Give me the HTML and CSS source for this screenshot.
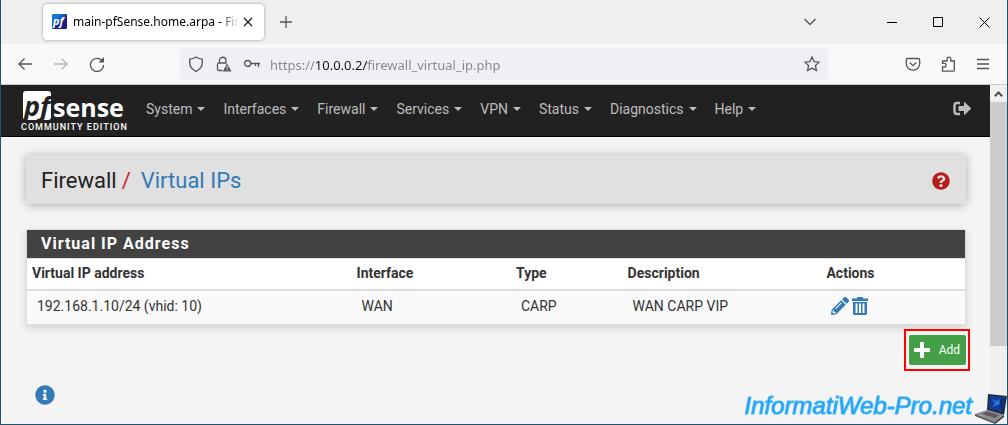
FILE: index.html
```html
<!doctype html>
<html lang="en">
  <head>
    <meta charset="utf-8" />
    <title>main-pfSense.home.arpa - Firewall: Virtual IPs</title>
    <link rel="stylesheet" href="styles.css">
  </head>
  <body>
    <div class="window">
      <header class="tabstrip">
        <div class="tab">
          <svg class="favicon" viewBox="0 0 16 16" width="16" height="16" aria-hidden="true">
            <defs>
              <linearGradient id="fav" x1="0" y1="0" x2="1" y2="1">
                <stop offset="0.3" stop-color="#1478d4" />
                <stop offset="0.6" stop-color="#1c1c86" />
              </linearGradient>
            </defs>
            <rect width="15" height="15" y="0" rx="1" fill="url(#fav)" />
            <text x="1" y="11" class="favicon-text">pf</text>
          </svg>
          <span class="tab-title">main-pfSense.home.arpa - Firew</span>
          <button class="tab-close" aria-label="Close tab">
            <svg viewBox="0 0 10 10" width="10" height="10"><path d="M1 1l8 8M9 1l-8 8" /></svg>
          </button>
        </div>
        <button class="new-tab" aria-label="New tab">
          <svg viewBox="0 0 12 12" width="12" height="12"><path d="M6 0v12M0 6h12" /></svg>
        </button>
        <div class="window-buttons">
          <button aria-label="List all tabs">
            <svg class="grey" viewBox="0 0 14 10" width="14" height="10"><path d="M1.500 2l5.500 5.500 5.500-5.500" /></svg>
          </button>
          <button aria-label="Minimize">
            <svg viewBox="0 0 11 11" width="11" height="11"><path d="M0 5.500h10" /></svg>
          </button>
          <button aria-label="Maximize">
            <svg viewBox="0 0 11 11" width="11" height="11"><path d="M.5.500h9v9h-9z" /></svg>
          </button>
          <button aria-label="Close">
            <svg viewBox="0 0 11 11" width="11" height="11"><path d="M.5.500l10 10M10.500.500l-10 10" /></svg>
          </button>
        </div>
      </header>

      <div class="toolbar">
        <div class="history">
          <button aria-label="Back">
            <svg viewBox="0 0 16 16" width="16" height="16"><path d="M15 8H1.500M7.500 2.500L2 8l5.500 5.500" /></svg>
          </button>
          <button aria-label="Forward" disabled>
            <svg viewBox="0 0 16 16" width="16" height="16"><path d="M1 8h13.500M8.500 2.500L14 8l-5.500 5.500" /></svg>
          </button>
          <button aria-label="Reload">
            <svg viewBox="0 0 16 16" width="16" height="16">
              <path d="M13.500 5.500A6.500 6.500 0 1 0 14.500 9" />
              <path class="fill" d="M15 1v5.500H9.500z" />
            </svg>
          </button>
        </div>
        <div class="urlbar">
          <svg viewBox="0 0 16 16" width="16" height="16">
            <path d="M8 1c2 1.400 4 2 6.300 2.200v3.600c0 4-2.600 6.800-6.300 8.500-3.700-1.700-6.300-4.500-6.300-8.500V3.200C4 3 6 2.400 8 1z" />
          </svg>
          <svg viewBox="0 0 16 16" width="16" height="16">
            <path d="M6.500 14.500H3A1.500 1.500 0 0 1 1.500 13V8.500A1.500 1.500 0 0 1 3 7h7.500M3.500 7V4.500a3.200 3.200 0 0 1 6.500 0V7.500" />
            <path class="fill" d="M11 7.500L6.800 15.500h8.700z" />
            <path class="mark" d="M11.100 10v2.600M11.100 13.400v1" />
          </svg>
          <svg viewBox="0 0 16 16" width="16" height="16">
            <circle cx="3.700" cy="7.500" r="3" />
            <path d="M6.700 7.500H16M14.500 7.500v3.500M11.500 7.500v2.500" />
          </svg>
          <input class="address" type="text" aria-label="Address" value="https://10.0.0.2/firewall_virtual_ip.php" />
          <button aria-label="Bookmark this page">
            <svg viewBox="0 0 16 16" width="16" height="16">
              <path d="M8 1l2.100 4.600 5.100.6-3.800 3.400 1 5L8 12.100l-4.400 2.500 1-5L.8 6.200l5.100-.6z" />
            </svg>
          </button>
        </div>
        <div class="toolbar-end">
          <button aria-label="Save to Pocket">
            <svg viewBox="0 0 16 16" width="16" height="16">
              <path d="M3 2.500h10a1.700 1.700 0 0 1 1.700 1.700V7.500a6.700 6.700 0 0 1-13.400 0V4.200A1.700 1.700 0 0 1 3 2.500z" />
              <path d="M4.700 6.500L8 9.600l3.300-3.100" />
            </svg>
          </button>
          <button aria-label="Extensions">
            <svg viewBox="0 0 16 16" width="16" height="16">
              <path d="M1.500 15.200V11h1.800a1.800 1.800 0 0 0 0-3.700H1.500V5H6V3a1.900 1.900 0 0 1 3.800 0v2h3.500v9q0 1.200-1.200 1.200z" />
            </svg>
          </button>
          <button aria-label="Open application menu">
            <svg viewBox="0 0 12 16" width="12" height="16"><path d="M0 3.500h12M0 8h12M0 12.500h12" /></svg>
          </button>
        </div>
      </div>

      <div class="viewport">
        <div class="page">
          <nav class="navbar">
            <a class="brand" href="#">
              <span class="logo"><span class="logo-pf">pf</span><span class="logo-sense">sense</span></span>
              <span class="edition">COMMUNITY EDITION</span>
            </a>
            <ul class="menu">
              <li><a href="#">System</a></li>
              <li><a href="#">Interfaces</a></li>
              <li><a href="#">Firewall</a></li>
              <li><a href="#">Services</a></li>
              <li><a href="#">VPN</a></li>
              <li><a href="#">Status</a></li>
              <li><a href="#">Diagnostics</a></li>
              <li><a href="#">Help</a></li>
            </ul>
            <a class="logout" href="#" aria-label="Logout">
              <svg viewBox="0 0 18 16" width="18" height="16">
                <path class="line" d="M7 2H4Q1.500 2 1.500 4.500v6Q1.500 13 4 13h3" />
                <path d="M5.500 5.500Q5.500 5 6 5h5V1.700q0-1 .8-.4l6 5.600q.4.600 0 1.200l-6 5.600q-.8.600-.8-.4V10H6q-.5 0-.5-.5z" />
              </svg>
            </a>
          </nav>

          <main class="content">
            <div class="page-header">
              <h1>Firewall<span class="slash">/</span><a href="#">Virtual IPs</a></h1>
              <a class="help" href="#" aria-label="Help for this page">
                <svg viewBox="0 0 512 512" width="18" height="18"><path d="M504 256c0 136.997-111.043 248-248 248S8 392.997 8 256C8 119.083 119.043 8 256 8s248 111.083 248 248zM262.655 90c-54.497 0-89.255 22.957-116.549 63.758-3.536 5.286-2.353 12.415 2.715 16.258l34.699 26.310c5.205 3.947 12.621 3.008 16.665-2.122 17.864-22.658 30.113-35.797 57.303-35.797 20.429 0 45.698 13.148 45.698 32.958 0 14.976-12.363 22.667-32.534 33.976C247.128 238.528 216 254.941 216 296v4c0 6.627 5.373 12 12 12h56c6.627 0 12-5.373 12-12v-1.333c0-28.462 83.186-29.647 83.186-106.667 0-58.002-60.165-102-116.531-102zM256 338c-25.365 0-46 20.635-46 46 0 25.364 20.635 46 46 46s46-20.636 46-46c0-25.365-20.635-46-46-46z" /></svg>
              </a>
            </div>

            <section class="panel">
              <h2>Virtual IP Address</h2>
              <table>
                <thead>
                  <tr>
                    <th class="col-address">Virtual IP address</th>
                    <th class="col-interface">Interface</th>
                    <th class="col-type">Type</th>
                    <th class="col-descr">Description</th>
                    <th>Actions</th>
                  </tr>
                </thead>
                <tbody>
                  <tr>
                    <td>192.168.1.10/24 (vhid: 10)</td>
                    <td>WAN</td>
                    <td>CARP</td>
                    <td>WAN CARP VIP</td>
                    <td>
                      <div class="actions">
                        <a href="#" aria-label="Edit virtual ip">
                          <svg viewBox="0 0 512 512" width="18" height="18"><path d="M497.900 142.100l-46.100 46.100c-4.700 4.700-12.300 4.700-17 0l-111-111c-4.700-4.700-4.700-12.300 0-17l46.100-46.100c18.700-18.700 49.100-18.700 67.900 0l60.100 60.100c18.800 18.700 18.800 49.100 0 67.900zM284.200 99.800L21.600 362.400.4 483.900c-2.900 16.400 11.400 30.600 27.800 27.800l121.500-21.300 262.600-262.600c4.700-4.700 4.700-12.300 0-17l-111-111c-4.800-4.700-12.400-4.700-17.100 0zM124.100 339.900c-5.500-5.500-5.500-14.300 0-19.800l154-154c5.500-5.500 14.300-5.500 19.800 0s5.500 14.300 0 19.800l-154 154c-5.500 5.500-14.300 5.500-19.800 0zM88 424h48v36.300l-64.500 11.300-31.100-31.100L51.700 376H88v48z" /></svg>
                        </a>
                        <a href="#" aria-label="Delete virtual ip">
                          <svg viewBox="0 0 16 18" width="16" height="18">
                            <path d="M0 1.500h4.500L5.500 0h5l1 1.500H16V4H0z" />
                            <path fill-rule="evenodd" d="M1 5h14v11.500q0 1.500-1.500 1.500h-11Q1 18 1 16.500zM3.500 6.500v9.500h2V6.500zM7 6.500v9.500h2V6.500zM10.500 6.500v9.500h2V6.500z" />
                          </svg>
                        </a>
                      </div>
                    </td>
                  </tr>
                </tbody>
              </table>
            </section>

            <div class="action-buttons">
              <div class="highlight">
                <button class="add">
                  <svg viewBox="0 0 16 16" width="16" height="16"><path d="M6 1q0-1 1-1h2q1 0 1 1v5h5q1 0 1 1v2q0 1-1 1h-5v5q0 1-1 1H7q-1 0-1-1v-5H1q-1 0-1-1V7q0-1 1-1h5z" /></svg>
                  Add
                </button>
              </div>
            </div>

            <a class="info" href="#" aria-label="Information">
              <svg viewBox="0 0 512 512" width="20" height="20"><path d="M256 8C119.043 8 8 119.083 8 256c0 136.997 111.043 248 248 248s248-111.003 248-248C504 119.083 392.957 8 256 8zm0 110c23.196 0 42 18.804 42 42s-18.804 42-42 42-42-18.804-42-42 18.804-42 42-42zm56 254c0 6.627-5.373 12-12 12h-88c-6.627 0-12-5.373-12-12v-24c0-6.627 5.373-12 12-12h12v-64h-12c-6.627 0-12-5.373-12-12v-24c0-6.627 5.373-12 12-12h64c6.627 0 12 5.373 12 12v100h12c6.627 0 12 5.373 12 12v24z" /></svg>
            </a>
          </main>
        </div>

        <div class="scrollbar">
          <button aria-label="Scroll up">
            <svg viewBox="0 0 9 6" width="9" height="6"><path d="M.8 5.200l3.700-3.700 3.700 3.700" /></svg>
          </button>
          <div class="thumb"></div>
        </div>
      </div>

      <div class="watermark">
        <span>InformatiWeb-Pro.net</span>
        <svg viewBox="0 0 32 30" width="32" height="30" aria-hidden="true">
          <path d="M13 0l19 2-3 19-17-5z" fill="#25282e" />
          <path d="M14.500 1.500l15.500 1.700-2.500 15.300-14-4z" fill="#0f3c96" />
          <path d="M17 5l5 2 4-3-2 4 4 4-6-1-5 2 3-4z" fill="#2f74d0" />
          <path d="M26 4l3 1-2 11-3-4z" fill="#0c2b78" />
          <path d="M12 16l17 5-9 7L0 20z" fill="#8b8b8f" />
          <path d="M12 17.500l12 3.500-4 3-13-4z" fill="#5a5a60" />
          <path d="M5 20.500l5 1.500-2 1-5-1.500z" fill="#a5a5a9" />
          <path d="M0 20l20 8v2L0 22z" fill="#55555a" />
          <path d="M20 28l9-7v2l-9 7z" fill="#333338" />
        </svg>
      </div>
    </div>
  </body>
</html>
```
FILE: styles.css
```css
* {
  box-sizing: border-box;
}

body {
  margin: 0;
  font-family: Roboto, sans-serif;
  font-size: 14px;
  line-height: 20px;
  color: #333;
}

a {
  color: #337ab7;
  text-decoration: none;
}

button {
  padding: 0;
  border: none;
  background: none;
  display: flex;
  align-items: center;
  justify-content: center;
  cursor: pointer;
}

svg {
  display: block;
  flex: none;
}

.window {
  position: relative;
  display: flex;
  flex-direction: column;
  min-height: 100vh;
  border: 1px solid #1d5470;
  border-top: none;
  overflow: hidden;
}

/* browser chrome */

.tabstrip svg,
.toolbar svg {
  fill: none;
  stroke: #55555c;
  stroke-width: 1.3;
}

.tabstrip {
  display: flex;
  align-items: center;
  height: 44px;
  padding-left: 42px;
  background: #efefef;
}

.tab {
  display: flex;
  align-items: center;
  gap: 5px;
  width: 221px;
  height: 36px;
  padding: 0 8px 0 9px;
  background: #fff;
  border-radius: 4px;
  box-shadow: 0 0 3px rgba(0, 0, 0, 0.4);
}

.tabstrip .favicon {
  stroke: none;
}

.favicon-text {
  font: italic bold 11px "Open Sans", sans-serif;
  fill: #fff;
}

.tab-title {
  flex: 1;
  overflow: hidden;
  white-space: nowrap;
  font-family: "Noto Sans", sans-serif;
  font-size: 12px;
  color: #000;
  -webkit-mask-image: linear-gradient(to left, transparent, #000 20px);
  mask-image: linear-gradient(to left, transparent, #000 20px);
}

.tab-close,
.new-tab {
  width: 16px;
  height: 24px;
}

.tab-close {
  margin-left: -4px;
}

.tab-close svg {
  stroke: #222;
}

.new-tab {
  margin-left: 14px;
}

.window-buttons {
  display: flex;
  margin-left: auto;
}

.window-buttons button {
  width: 46px;
  height: 44px;
}

.window-buttons button:first-child {
  margin-right: 36px;
}

.window-buttons svg {
  stroke: #000;
  stroke-width: 1;
}

.window-buttons .grey {
  stroke: #55555c;
  stroke-width: 1.3;
}

.toolbar {
  display: flex;
  align-items: center;
  height: 41px;
  background: #f9f9fb;
  border-bottom: 1px solid #ccc;
}

.history {
  display: flex;
  gap: 20px;
  width: 179px;
  padding-left: 16px;
}

.history button:disabled {
  opacity: 0.4;
}

.urlbar {
  flex: 1;
  display: flex;
  align-items: center;
  gap: 12px;
  height: 32px;
  padding: 0 8px;
  background: #f0f0f4;
  border-radius: 4px;
}

.toolbar .fill {
  fill: #55555c;
  stroke: none;
}

.toolbar .mark {
  stroke: #fff;
  stroke-width: 1;
}

/* the host part of the address is darker than the rest */
.address {
  flex: 1;
  min-width: 0;
  margin-left: -2px;
  padding: 2px 0 0;
  border: none;
  outline: none;
  font-family: "Noto Sans", sans-serif;
  font-size: 13px;
  color: transparent;
  background: linear-gradient(to right, #85858c 46px, #15141a 46px, #15141a 98px, #85858c 98px);
  -webkit-background-clip: text;
  background-clip: text;
}

.toolbar-end {
  display: flex;
  gap: 20px;
  width: 179px;
  justify-content: flex-end;
  padding-right: 18px;
}

/* page */

.viewport {
  flex: 1;
  display: flex;
}

.page {
  flex: 1;
  background: #f4f4f4;
}

.navbar {
  display: flex;
  align-items: center;
  height: 52px;
  padding: 0 19px 3px 20px;
  background: #212121;
  border-bottom: 1px solid #000;
}

.brand {
  display: flex;
  flex-direction: column;
  width: 125px;
  padding-top: 5px;
  color: #fff;
}

.logo {
  display: flex;
  gap: 2px;
  padding-left: 2px;
  height: 30px;
  font-family: "Open Sans", sans-serif;
  font-weight: bold;
}

.logo-pf {
  width: 28px;
  height: 29px;
  border-radius: 3px;
  background: #fff;
  color: #212121;
  font-size: 27px;
  font-style: italic;
  line-height: 29px;
  text-align: center;
}

.logo-sense {
  font-size: 25px;
  line-height: 32px;
}

.edition {
  font-size: 9px;
  font-weight: 500;
  line-height: 12px;
  letter-spacing: 1px;
  white-space: nowrap;
}

.menu {
  flex: 1;
  display: flex;
  gap: 18px;
  margin: 0;
  padding: 0;
  list-style: none;
}

.menu a {
  display: flex;
  align-items: center;
  gap: 5px;
  color: #bdbdbd;
}

.menu a::after {
  content: "";
  border-top: 4px solid #bdbdbd;
  border-left: 4px solid transparent;
  border-right: 4px solid transparent;
}

.logout svg {
  fill: #bdbdbd;
}

.logout .line {
  fill: none;
  stroke: #bdbdbd;
  stroke-width: 2.4;
}

.content {
  padding: 18px 24px 9px 25px;
}

.page-header {
  display: flex;
  align-items: center;
  justify-content: space-between;
  height: 49px;
  padding: 2px 16px 0 15px;
  background: #e0e0e0;
  border-radius: 3px;
  box-shadow: 0 1px 10px rgba(0, 0, 0, 0.3);
}

h1 {
  margin: 0;
  font-size: 22px;
  font-weight: normal;
  line-height: 28px;
  color: #212121;
}

.slash {
  margin: 0 10px 0 5px;
  color: #c62828;
}

.help svg {
  fill: #b71c1c;
}

.panel {
  margin-top: 25px;
  background: #fff;
  border: 1px solid #ddd;
  box-shadow: 0 3px 8px rgba(0, 0, 0, 0.15);
}

h2 {
  margin: 0;
  padding: 4px 14px;
  font-size: 16px;
  font-weight: 700;
  letter-spacing: 1px;
  color: #fff;
  background: #424242;
}

table {
  width: 100%;
  border-collapse: collapse;
  table-layout: fixed;
}

th {
  padding: 4px 5px 6px;
  text-align: left;
  border-top: 1px solid #ddd;
  border-bottom: 2px solid #ddd;
}

td {
  padding: 5px 10px 8px;
  background: #f9f9f9;
}

.col-address {
  width: 34.6%;
}

.col-interface {
  width: 17%;
}

.col-type {
  width: 11.9%;
}

.col-descr {
  width: 21.2%;
}

.actions {
  display: flex;
  gap: 3px;
}

.actions svg,
.info svg {
  fill: #337ab7;
}

.action-buttons {
  display: flex;
  justify-content: flex-end;
  margin: 4px -4px 0 0;
}

/* red frame round the add button */
.highlight {
  padding: 4px 2px 4px 3px;
  border: 2px solid #f00;
}

.add {
  gap: 9px;
  height: 30px;
  padding: 0 6px 0 5px;
  font-family: inherit;
  font-size: 12px;
  color: #fff;
  background: #43a047;
  border-radius: 2px;
}

.add svg {
  fill: #fff;
}

.info {
  display: flex;
  margin: 14px 0 0 9px;
}

.scrollbar {
  width: 17px;
  background: #f0f0f0;
}

.scrollbar button {
  width: 17px;
  height: 17px;
}

.scrollbar svg {
  fill: none;
  stroke: #505050;
  stroke-width: 2;
}

.thumb {
  height: 72%;
  background: #cdcdcd;
}

.watermark {
  position: absolute;
  right: 0;
  bottom: 0;
  display: flex;
  align-items: flex-start;
  gap: 3px;
  font: italic 24px/24px "Liberation Sans", sans-serif;
  color: #2196f3;
  -webkit-text-stroke: 1px #35b5f8;
}
```
